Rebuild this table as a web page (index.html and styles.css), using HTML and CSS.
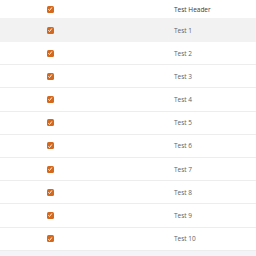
FILE: index.html
```html
<!DOCTYPE html>
<html>
<head>
<meta charset="utf-8">
<link rel="stylesheet" href="styles.css">
</head>
<body>
<div class="table">
  <div class="row header">
    <div class="cell check"><span class="box"><svg viewBox="0 0 8 8" width="8" height="8"><path d="M2.6 4.6 L3.5 5.5 L5.6 2.8" fill="none" stroke="#fff" stroke-width="0.9" stroke-linecap="round" stroke-linejoin="round"/></svg></span></div>
    <div class="cell label strong">Test Header</div>
  </div>
  <div class="row alt">
    <div class="cell check"><span class="box"><svg viewBox="0 0 8 8" width="8" height="8"><path d="M2.6 4.6 L3.5 5.5 L5.6 2.8" fill="none" stroke="#fff" stroke-width="0.9" stroke-linecap="round" stroke-linejoin="round"/></svg></span></div>
    <div class="cell label">Test 1</div>
  </div>
  <div class="row">
    <div class="cell check"><span class="box"><svg viewBox="0 0 8 8" width="8" height="8"><path d="M2.6 4.6 L3.5 5.5 L5.6 2.8" fill="none" stroke="#fff" stroke-width="0.9" stroke-linecap="round" stroke-linejoin="round"/></svg></span></div>
    <div class="cell label">Test 2</div>
  </div>
  <div class="row">
    <div class="cell check"><span class="box"><svg viewBox="0 0 8 8" width="8" height="8"><path d="M2.6 4.6 L3.5 5.5 L5.6 2.8" fill="none" stroke="#fff" stroke-width="0.9" stroke-linecap="round" stroke-linejoin="round"/></svg></span></div>
    <div class="cell label">Test 3</div>
  </div>
  <div class="row">
    <div class="cell check"><span class="box"><svg viewBox="0 0 8 8" width="8" height="8"><path d="M2.6 4.6 L3.5 5.5 L5.6 2.8" fill="none" stroke="#fff" stroke-width="0.9" stroke-linecap="round" stroke-linejoin="round"/></svg></span></div>
    <div class="cell label">Test 4</div>
  </div>
  <div class="row">
    <div class="cell check"><span class="box"><svg viewBox="0 0 8 8" width="8" height="8"><path d="M2.6 4.6 L3.5 5.5 L5.6 2.8" fill="none" stroke="#fff" stroke-width="0.9" stroke-linecap="round" stroke-linejoin="round"/></svg></span></div>
    <div class="cell label">Test 5</div>
  </div>
  <div class="row">
    <div class="cell check"><span class="box"><svg viewBox="0 0 8 8" width="8" height="8"><path d="M2.6 4.6 L3.5 5.5 L5.6 2.8" fill="none" stroke="#fff" stroke-width="0.9" stroke-linecap="round" stroke-linejoin="round"/></svg></span></div>
    <div class="cell label">Test 6</div>
  </div>
  <div class="row">
    <div class="cell check"><span class="box"><svg viewBox="0 0 8 8" width="8" height="8"><path d="M2.6 4.6 L3.5 5.5 L5.6 2.8" fill="none" stroke="#fff" stroke-width="0.9" stroke-linecap="round" stroke-linejoin="round"/></svg></span></div>
    <div class="cell label">Test 7</div>
  </div>
  <div class="row">
    <div class="cell check"><span class="box"><svg viewBox="0 0 8 8" width="8" height="8"><path d="M2.6 4.6 L3.5 5.5 L5.6 2.8" fill="none" stroke="#fff" stroke-width="0.9" stroke-linecap="round" stroke-linejoin="round"/></svg></span></div>
    <div class="cell label">Test 8</div>
  </div>
  <div class="row">
    <div class="cell check"><span class="box"><svg viewBox="0 0 8 8" width="8" height="8"><path d="M2.6 4.6 L3.5 5.5 L5.6 2.8" fill="none" stroke="#fff" stroke-width="0.9" stroke-linecap="round" stroke-linejoin="round"/></svg></span></div>
    <div class="cell label">Test 9</div>
  </div>
  <div class="row">
    <div class="cell check"><span class="box"><svg viewBox="0 0 8 8" width="8" height="8"><path d="M2.6 4.6 L3.5 5.5 L5.6 2.8" fill="none" stroke="#fff" stroke-width="0.9" stroke-linecap="round" stroke-linejoin="round"/></svg></span></div>
    <div class="cell label">Test 10</div>
  </div>
</div>
<div class="footer"></div>
</body>
</html>
```

FILE: styles.css
```css
html, body {
  margin: 0;
  padding: 0;
  background: #ffffff;
}
body {
  font-family: "Open Sans", "Noto Sans", sans-serif;
  font-size: 6.5px;
  color: #636363;
}
.table {
  display: flex;
  flex-direction: column;
}
.row {
  box-sizing: border-box;
  display: grid;
  grid-template-columns: 100px 1fr;
  align-items: center;
  height: 23.2px;
  border-bottom: 1px solid #ededed;
}
.row.header {
  height: 18px;
  border-bottom: none;
}
.row.alt {
  background: #f2f2f3;
  border-bottom: none;
  height: 24px;
}
.cell.check {
  display: flex;
  justify-content: center;
}
.box {
  width: 7px;
  height: 7px;
  border-radius: 1.5px;
  background: #d2691e;
  display: flex;
  align-items: center;
  justify-content: center;
  overflow: hidden;
}
.box svg {
  display: block;
  flex: none;
}
.label {
  padding-left: 74px;
}
.label.strong {
  color: #3c3c3c;
}
.footer {
  height: 8px;
  background: #f3f4f8;
}
```
